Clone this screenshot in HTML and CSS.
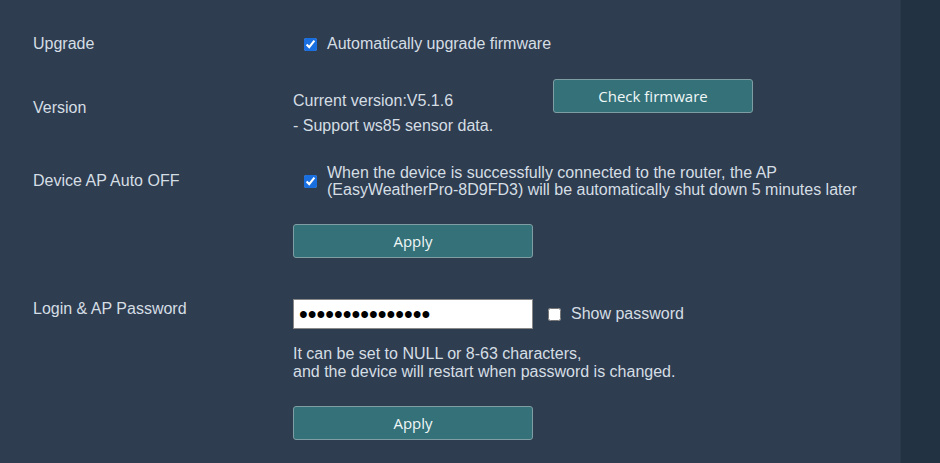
FILE: index.html
```html
<!DOCTYPE html>
<html lang="en">
<head>
    <meta charset="UTF-8">
    <meta name="viewport" content="width=device-width, initial-scale=1.0">
    <title>Device Settings</title>
    <link rel="stylesheet" href="styles.css">
</head>
<body>

<div class="page">
    <main class="panel">

        <div class="row row-upgrade">
            <div class="label">Upgrade</div>
            <div class="value">
                <label class="check">
                    <input type="checkbox" checked>
                    <span>Automatically upgrade firmware</span>
                </label>
            </div>
        </div>

        <div class="row row-version">
            <div class="label">Version</div>
            <div class="value version">
                <div class="version-text">
                    <div>Current version:V5.1.6</div>
                    <div>- Support ws85 sensor data.</div>
                </div>
                <button type="button" class="btn btn-check">Check firmware</button>
            </div>
        </div>

        <div class="row row-ap">
            <div class="label">Device AP Auto OFF</div>
            <div class="value">
                <label class="check check-multi">
                    <input type="checkbox" checked>
                    <span>When the device is successfully connected to the router, the AP<br>(EasyWeatherPro-8D9FD3) will be automatically shut down 5 minutes later</span>
                </label>
            </div>
        </div>

        <div class="row row-apply">
            <div class="label"></div>
            <div class="value">
                <button type="button" class="btn btn-apply">Apply</button>
            </div>
        </div>

        <div class="row row-password">
            <div class="label">Login &amp; AP Password</div>
            <div class="value">
                <div class="pass-line">
                    <input type="password" class="pass-input" value="123456789012345">
                    <label class="check check-show">
                        <input type="checkbox">
                        <span>Show password</span>
                    </label>
                </div>
                <p class="hint">It can be set to NULL or 8-63 characters,<br>and the device will restart when password is changed.</p>
                <button type="button" class="btn btn-apply btn-apply-last">Apply</button>
            </div>
        </div>

    </main>
    <aside class="side"></aside>
</div>

</body>
</html>
```

FILE: styles.css
```css
body { margin: 0; background-color: #2e3d4f; font-family: "Liberation Sans", Arial, sans-serif; font-size: 16px; color: #d5dde5; }
.page { display: flex; height: 463px; overflow: hidden; }
.panel { width: 901px; border-right: 1px solid #29394a; padding: 34px 0 0 33px; box-sizing: border-box; }
.side { flex: 1; background-color: #233243; }

.row { display: grid; grid-template-columns: 260px 1fr; line-height: 20px; }
.label { color: #d5dde5; }

/* checkboxes */
.check { display: flex; align-items: center; padding-left: 7px; }
.check input { width: 13px; height: 13px; margin: 0 10px 0 4px; accent-color: #1a6fe0; flex-shrink: 0; }
.check-multi span { line-height: 17px; }

/* version row */
.row-version { margin-top: 25px; }
.row-version .label { padding-top: 19px; }
.version { display: flex; }
.version-text { width: 260px; padding-top: 9px; line-height: 25px; }

.btn { background-color: #347179; color: #f0f7f7; border: 1px solid #7f9ea3; border-radius: 3px; font-family: "Open Sans", "Liberation Sans", sans-serif; font-size: 15px; cursor: pointer; }
.btn:hover { background-color: #2c636a; }
.btn-check { width: 200px; height: 34px; }

/* device AP row */
.row-ap { margin-top: 26px; align-items: center; }
.row-apply { margin-top: 26px; }
.btn-apply { width: 240px; height: 34px; }

/* password row */
.row-password { margin-top: 41px; }
.pass-line { display: flex; align-items: center; }
.pass-input { width: 240px; height: 30px; box-sizing: border-box; border: 1px solid #888; background: #fff; padding: 0 5px; font-family: "Liberation Sans", Arial, sans-serif; font-size: 25px; letter-spacing: 0; color: #000; margin: 0; }
.check-show { padding-left: 11px; }
.check-show input { margin-right: 10px; }
.hint { margin: 16px 0 0; line-height: 18px; }
.btn-apply-last { margin-top: 25px; }
```
